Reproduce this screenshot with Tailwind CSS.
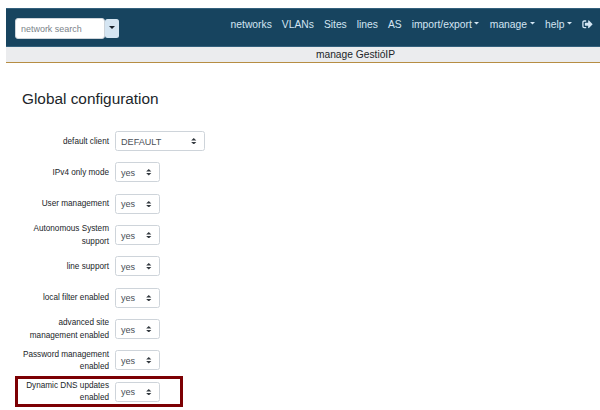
<!DOCTYPE html>
<html lang="en">
<head>
<meta charset="utf-8">
<title>GestióIP</title>
<script src="https://cdn.jsdelivr.net/npm/@tailwindcss/browser@4"></script>
</head>
<body class="bg-white h-[410px] overflow-hidden pt-2 pl-1.5 text-[#212529] font-['Liberation_Sans',Arial,sans-serif]">
<header class="h-[39px] bg-[#17445f] border-y border-[#33607c] flex items-start justify-between pl-[9px] pr-[7px]">
  <form class="flex items-center pt-[9px]">
    <input type="text" placeholder="network search" class="block w-[90px] h-[21px] rounded-[3px] border border-[#ced4da] bg-white pl-[5px] pt-px text-[8.96px] placeholder:text-[#7b838a]">
    <button type="button" aria-label="Search options" class="w-[13.5px] h-[18.5px] rounded-[2.5px] bg-[#d5e5f2] flex items-center justify-center pb-[3px]">
      <svg class="w-[6px] h-[3px]" viewBox="0 0 5 3" preserveAspectRatio="none"><path d="M0 0h5L2.5 3z" fill="#17212a"/></svg>
    </button>
  </form>
  <nav class="flex items-center pt-[9px] text-[10.3px] leading-[13px] text-[#d3e5f3] whitespace-nowrap">
    <a class="mr-[10px]">networks</a>
    <a class="mr-[10px]">VLANs</a>
    <a class="mr-[10px]">Sites</a>
    <a class="mr-[10px]">lines</a>
    <a class="mr-[10px]">AS</a>
    <a class="mr-[10.5px] flex items-center gap-[2.5px]">import/export<svg class="w-[5px] h-[2.5px] -mt-[2px]" viewBox="0 0 5 2.5"><path d="M0 0h5L2.5 2.5z" fill="currentColor"/></svg></a>
    <a class="mr-[10.5px] flex items-center gap-[2.5px]">manage<svg class="w-[5px] h-[2.5px] -mt-[2px]" viewBox="0 0 5 2.5"><path d="M0 0h5L2.5 2.5z" fill="currentColor"/></svg></a>
    <a class="mr-[10px] flex items-center gap-[2.5px]">help<svg class="w-[5px] h-[2.5px] -mt-[2px]" viewBox="0 0 5 2.5"><path d="M0 0h5L2.5 2.5z" fill="currentColor"/></svg></a>
    <a aria-label="Log out"><svg class="w-[11px] h-[10.5px]" viewBox="0 0 512 512" fill="currentColor"><path d="M497 273L329 441c-15 15-41 4.500-41-17v-96H152c-13.300 0-24-10.700-24-24v-96c0-13.300 10.700-24 24-24h136V88c0-21.400 25.900-32 41-17l168 168c9.300 9.400 9.300 24.600 0 34zM192 436v-40c0-6.600-5.400-12-12-12H96c-17.700 0-32-14.300-32-32V160c0-17.700 14.300-32 32-32h84c6.600 0 12-5.400 12-12V76c0-6.600-5.400-12-12-12H96c-53 0-96 43-96 96v192c0 53 43 96 96 96h84c6.600 0 12-5.400 12-12z"/></svg></a>
  </nav>
</header>
<div class="h-4 bg-[#ebecee] border-b border-[#b68d43] pl-[105px] pt-px text-center text-[10.24px] leading-[14px]">
  <span>manage GestióIP</span>
</div>
<main class="pl-[9px]">
  <h1 class="pl-[7px] pt-[26px] text-[15.36px] leading-[19px]">Global configuration</h1>
  <form id="rows" class="pt-[17.5px]"></form>
</main>
<script>
const rows = [
  ["default client", "DEFAULT"],
  ["IPv4 only mode", "yes"],
  ["User management", "yes"],
  ["Autonomous System<br>support", "yes"],
  ["line support", "yes"],
  ["local filter enabled", "yes"],
  ["advanced site<br>management enabled", "yes"],
  ["Password management<br>enabled", "yes"],
  ["Dynamic DNS updates<br>enabled", "yes"]
];
document.getElementById("rows").innerHTML = rows.map(([label, value], i) => {
  const wide = value === "DEFAULT";
  const frame = i === rows.length - 1 ? "outline-[3px] -outline-offset-[3px] outline-[#7c0003]" : "";
  return `<div class="h-[31.33px] w-[168px] flex items-center ${frame}">
    <label class="w-[94px] shrink-0 text-right text-[8.2px] leading-[12.3px] whitespace-nowrap pt-px">${label}</label>
    <div class="ml-[6px] h-5 shrink-0 rounded-[2.5px] border border-[#ced4da] flex items-center justify-between pl-[5px] pr-[7.5px] pt-px text-[9.1px] leading-3 text-[#495057] ${wide ? "w-[90px]" : "w-[45px]"}">
      <span>${value}</span>
      <svg class="w-[5.5px] h-[6.5px] -mt-px" viewBox="0 0 4 5"><path d="M2 0L0 2h4zm0 5L0 3h4z" fill="#343a40"/></svg>
    </div>
  </div>`;
}).join("");
</script>
</body>
</html>
